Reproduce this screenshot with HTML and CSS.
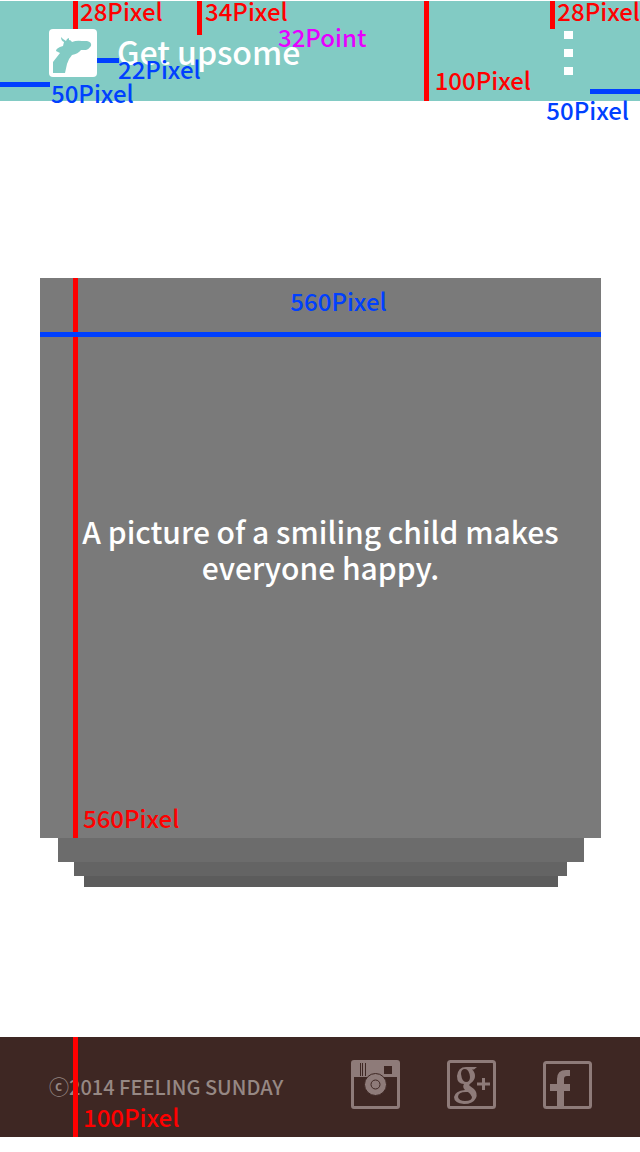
FILE: index.html
```html
<!DOCTYPE html>
<html lang="en">
<head>
<meta charset="utf-8">
<meta name="viewport" content="width=device-width, initial-scale=1">
<title>Get upsome</title>
<link rel="stylesheet" href="styles.css">
</head>
<body>
<header class="bar">
  <svg class="logo" viewBox="0 0 48 48" aria-hidden="true">
    <rect width="48" height="48" rx="4" fill="#fff"/>
    <path class="logo-shape" d="M4 44V33L11 24L7 22Q7 19 14 17L15 13Q12 12 12 8L14 10L17 12L18 10L20 9L20 11Q22 11 23 13Q28 11 33 12H38Q43 13 42 17Q40 20 37 21L32 21Q29 25 23 26Q20 29 18 35L16 44Z"/>
  </svg>
  <h1 class="title">Get upsome</h1>
  <button class="menu" type="button" aria-label="Menu"><span class="dot"></span><span class="dot"></span><span class="dot"></span></button>
  <div class="spec">
    <i class="line red logo-top"></i><span class="label red-text logo-top-label">28Pixel</span>
    <i class="line red title-top"></i><span class="label red-text title-top-label">34Pixel</span>
    <i class="line blue logo-gap"></i><span class="label blue-text logo-gap-label">22Pixel</span>
    <i class="line blue left-pad"></i><span class="label blue-text left-pad-label">50Pixel</span>
    <span class="label pink-text title-size-label">32Point</span>
    <i class="line red bar-height"></i><span class="label red-text bar-height-label">100Pixel</span>
    <i class="line red menu-top"></i><span class="label red-text menu-top-label">28Pixel</span>
    <i class="line blue right-pad"></i><span class="label blue-text right-pad-label">50Pixel</span>
  </div>
</header>
<main class="content">
  <article class="card">
    <p class="quote">A picture of a smiling child makes everyone happy.</p>
    <div class="spec">
      <i class="line red card-height"></i><span class="label red-text card-height-label">560Pixel</span>
      <i class="line blue card-width"></i><span class="label blue-text card-width-label">560Pixel</span>
    </div>
  </article>
  <div class="layer layer-one"></div>
  <div class="layer layer-two"></div>
  <div class="layer layer-three"></div>
</main>
<footer class="footer">
  <p class="copyright">ⓒ2014 FEELING SUNDAY</p>
  <nav class="social" aria-label="Social">
    <a href="#" aria-label="Instagram">
      <svg class="icon" viewBox="0 0 49 49">
        <path fill="currentColor" fill-rule="evenodd" d="M3 0H46Q49 0 49 3V46Q49 49 46 49H3Q0 49 0 46V3Q0 0 3 0ZM3 17V46H46V17ZM33 6V14H41V6Z"/>
        <circle class="hub" cx="24.500" cy="24.500" r="11"/>
        <circle class="cut" cx="24.500" cy="24.500" r="4.500"/>
        <path class="cut" d="M9.500 3V16M11.500 3V16M14.500 3V16"/>
      </svg>
    </a>
    <a href="#" aria-label="Google Plus">
      <svg class="icon" viewBox="0 0 49 49">
        <rect class="frame" x="1.500" y="1.500" width="46" height="46" rx="2"/>
        <path fill="currentColor" fill-rule="evenodd" d="M19 7H30L27 9.500H25Q28 12 28 16Q28 20 24 23Q21 25 23 26L27 29Q31 33 29 38Q26 44 17 44Q7 43 7 37Q8 31 18 30Q15 27 17 24Q10 24 10 16Q11 7 19 7ZM18 9Q14 9 14 14Q15 22 19 22Q23 22 23 17Q22 9 18 9ZM19 32Q11 32 11 37Q12 41 18 41Q25 41 25 37Q24 34 21 32Z"/>
        <path class="plus" d="M30 24H43M36.500 18V30"/>
      </svg>
    </a>
    <a href="#" aria-label="Facebook">
      <svg class="icon" viewBox="0 0 49 49">
        <rect class="frame" x="1.500" y="2.500" width="46" height="45" rx="2"/>
        <path fill="currentColor" d="M14 48V31H7V24H14V19Q14 10 23 10H27V16H24Q21 16 21 19V24H27V31H21V48Z"/>
      </svg>
    </a>
  </nav>
  <div class="spec">
    <i class="line red footer-height"></i><span class="label red-text footer-height-label">100Pixel</span>
  </div>
</footer>
</body>
</html>
```
FILE: styles.css
```css
* { box-sizing: border-box; }
body {
  margin: 0;
  min-height: 100vh;
  padding: 1px 0 15px;
  display: flex;
  flex-direction: column;
  background: #fff;
  font-family: "Noto Sans CJK KR", "Noto Sans", sans-serif;
  font-weight: 500;
}
.bar, .footer { position: relative; display: flex; align-items: center; height: 100px; }
.bar { padding: 0 49px; background: #82cbc4; }
.logo { width: 48px; height: 48px; margin-top: 4px; }
.logo-shape { fill: #82cbc4; }
.title { margin: 0 0 0 20px; font-size: 32px; font-weight: 500; line-height: 48px; color: #fff; }
.menu {
  display: flex;
  flex-direction: column;
  align-items: center;
  gap: 10px;
  width: 45px;
  margin: 4px 0 0 auto;
  padding: 0;
  border: 0;
  background: none;
}
.dot { width: 9px; height: 8px; background: #fff; }
.content { flex: 1; padding: 177px 39px 150px 40px; }
.card {
  position: relative;
  display: flex;
  align-items: center;
  justify-content: center;
  aspect-ratio: 561 / 560;
  padding: 0 32px 18px;
  background: #7a7a7a;
}
.quote { margin: 0; font-size: 30px; line-height: 36px; color: #fff; text-align: center; }
.layer-one { height: 24px; margin: 0 17px 0 18px; background: #6c6c6c; }
.layer-two { height: 14px; margin: 0 34px; background: #646464; }
.layer-three { height: 11px; margin: 0 43px 0 44px; background: #5c5c5c; }
.footer { justify-content: space-between; padding: 0 48px 0 49px; background: #3e2723; color: #8e7b79; }
.copyright { margin: 0; font-size: 20px; line-height: 24px; color: #968884; }
.social { display: flex; gap: 47px; margin-bottom: 5px; }
.social a { display: block; color: inherit; }
.icon { display: block; width: 49px; height: 49px; }
.hub { fill: currentColor; stroke: #3e2723; stroke-width: 1; }
.cut { fill: none; stroke: #3e2723; stroke-width: 1; }
.frame { fill: none; stroke: currentColor; stroke-width: 3; }
.plus { fill: none; stroke: currentColor; stroke-width: 3; }

/* Measurement overlay */
.spec { position: absolute; inset: 0; pointer-events: none; }
.line, .label { position: absolute; }
.label { font-size: 24px; line-height: 26px; white-space: nowrap; }
.red { width: 5px; background: #f00; }
.blue { height: 5px; background: #0040ff; }
.red-text { color: #f00; }
.blue-text { color: #0040ff; }
.pink-text { color: #e600ff; }
.logo-top { left: 73px; top: 0; height: 28px; }
.logo-top-label { left: 80px; top: -3px; }
.title-top { left: 197px; top: 0; height: 34px; }
.title-top-label { left: 205px; top: -3px; }
.logo-gap { left: 97px; top: 57px; width: 22px; }
.logo-gap-label { left: 118px; top: 55px; }
.left-pad { left: 0; top: 81px; width: 50px; }
.left-pad-label { left: 51px; top: 79px; }
.title-size-label { left: 278px; top: 23px; }
.bar-height { right: 211px; top: 0; height: 100px; }
.bar-height-label { right: 109px; top: 66px; }
.menu-top { right: 85px; top: 0; height: 28px; }
.menu-top-label { right: 0; top: -3px; }
.right-pad { right: 0; top: 88px; width: 50px; }
.right-pad-label { right: 11px; top: 96px; }
.card-height { left: 33px; top: 0; height: 100%; }
.card-height-label { left: 43px; bottom: 7px; }
.card-width { left: 0; top: 54px; width: 100%; }
.card-width-label { left: 0; right: 0; top: 10px; padding-left: 36px; text-align: center; }
.footer-height { left: 73px; top: 0; height: 100%; }
.footer-height-label { left: 83px; top: 67px; }
```
